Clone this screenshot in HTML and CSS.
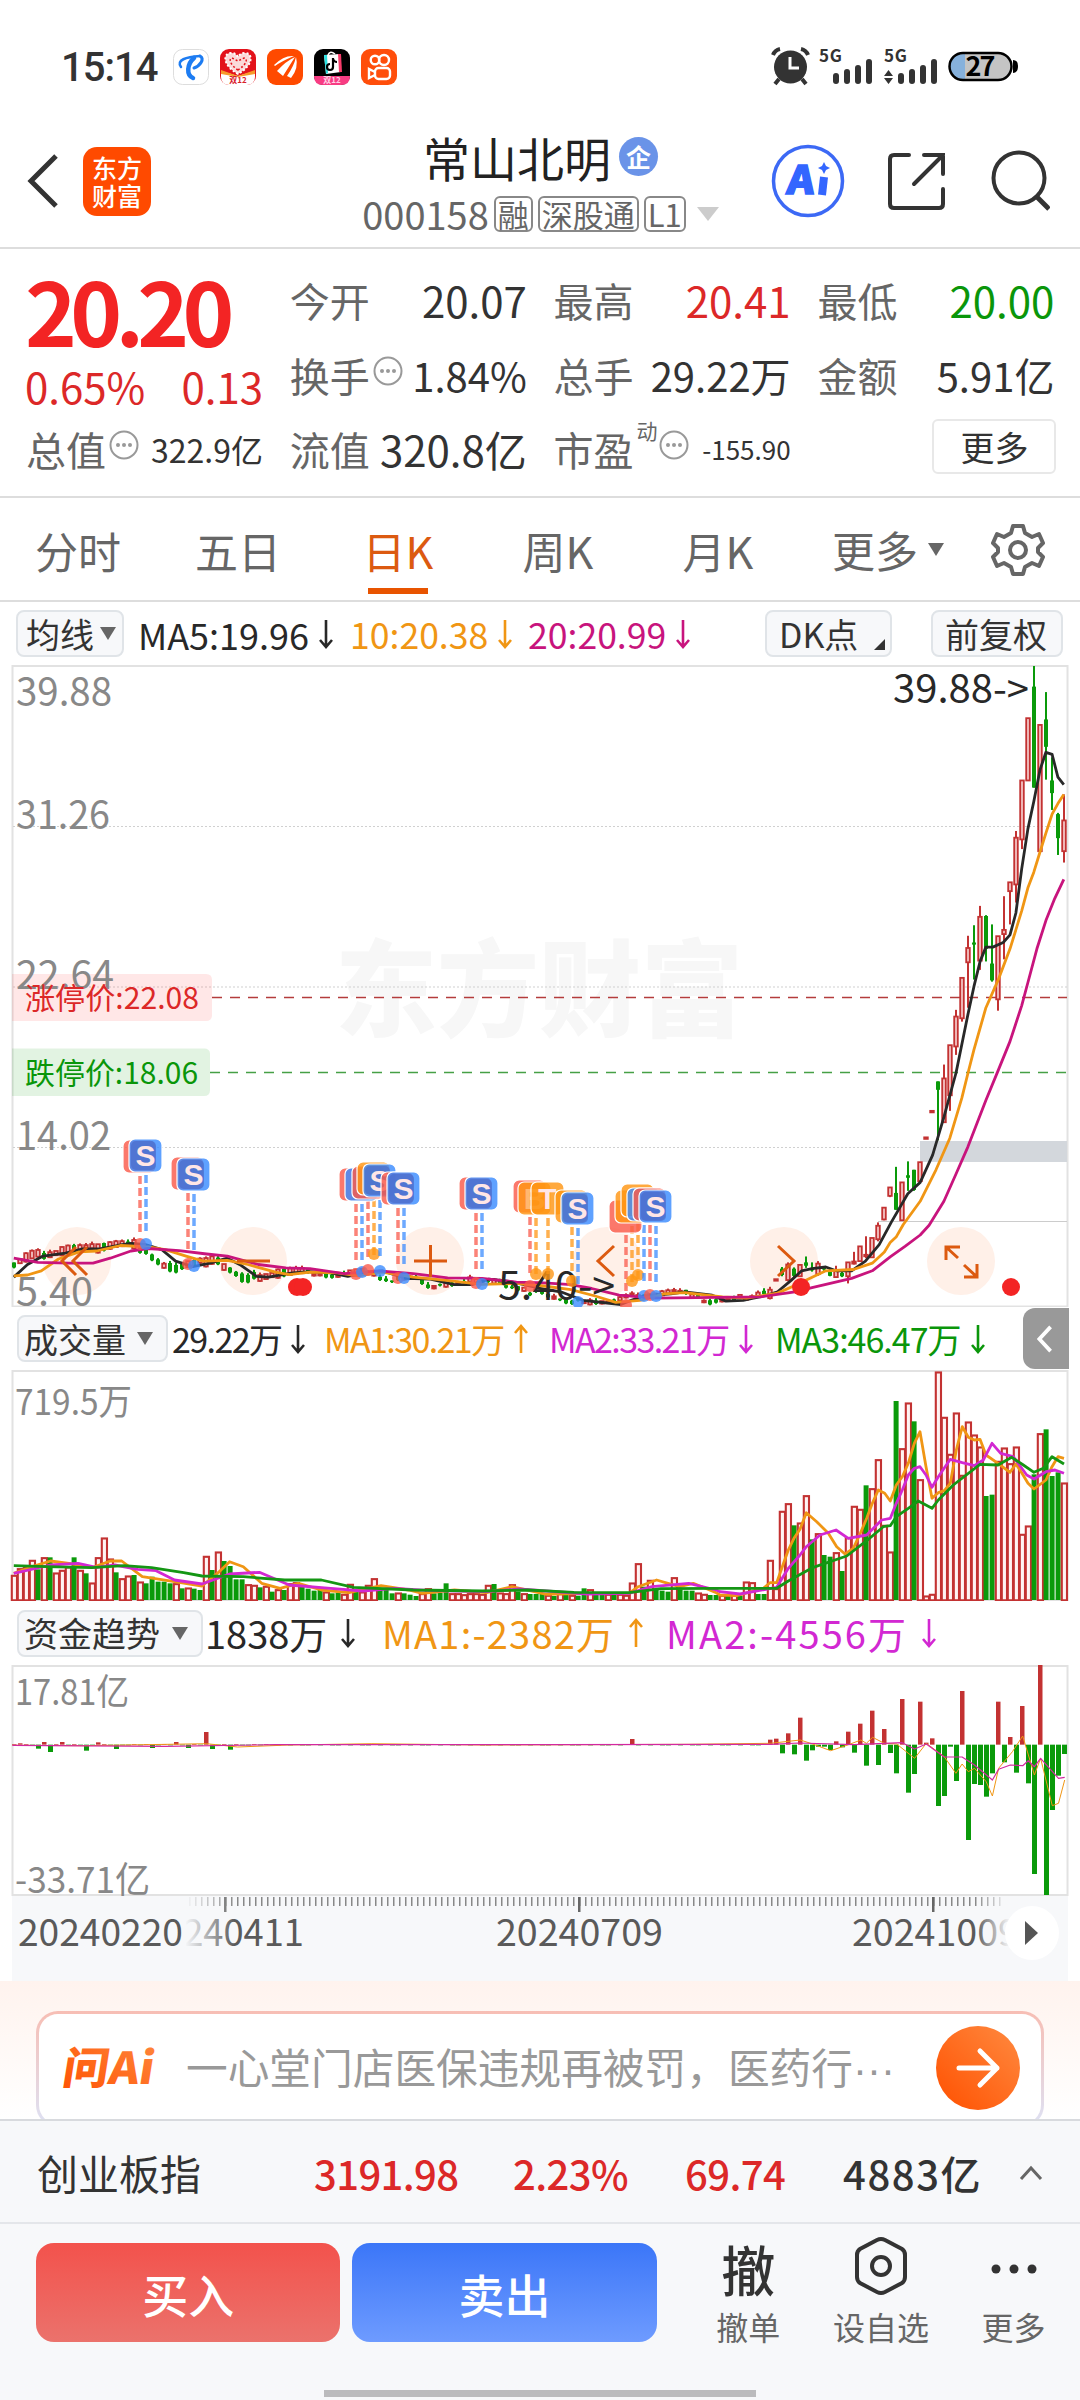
FILE: index.html
```html
<!DOCTYPE html>
<html lang="zh-CN">

<head>
  <meta charset="UTF-8">
  <meta name="viewport" content="width=device-width, initial-scale=1.0">
  <title>常山北明 000158</title>
  <link rel="stylesheet" href="styles.css">
</head>

<body>
  <svg class="defs" width="0" height="0">
    <symbol id="down" viewBox="0 0 16 30"><path d="M8 1V28M2 21L8 28L14 21" fill="none" stroke="currentColor" stroke-width="2.6"/></symbol>
    <symbol id="up" viewBox="0 0 16 30"><path d="M8 29V2M2 9L8 2L14 9" fill="none" stroke="currentColor" stroke-width="2.6"/></symbol>
    <symbol id="info" viewBox="0 0 30 30"><circle cx="15" cy="15" r="13.5" fill="none" stroke="#999" stroke-width="2"/><circle cx="9" cy="15" r="2" fill="#999"/><circle cx="15" cy="15" r="2" fill="#999"/><circle cx="21" cy="15" r="2" fill="#999"/></symbol>
  </svg>

  <div id="status">
    <div class="clock">15:14</div>
    <div class="apps">
      <svg width="36" height="36" viewBox="0 0 36 36"><rect x=".5" y=".5" width="35" height="35" rx="9" fill="#fff" stroke="#ddd"/><g fill="none" stroke="#1d7cf2" stroke-linecap="round"><path d="M8 18C3 11 13 8 27 7" stroke-width="2.500"/><path d="M27 7C32 10 27 17 21 19" stroke-width="3"/><path d="M21 9C14 15 13 26 20 29" stroke-width="4.500"/></g></svg>
      <svg width="36" height="36" viewBox="0 0 36 36"><rect width="36" height="36" rx="9" fill="#e3121b"/><path d="M1 22L18 27L35 22V28Q35 35 27 36H9Q1 35 1 28Z" fill="#fff"/><path d="M1 21L18 27L35 21V25L18 28L1 25Z" fill="#f79a2b"/><path d="M18 25C2 16 3 4 11 4Q16 4 18 8Q20 4 25 4C33 4 34 16 18 25Z" fill="#fbd9d9" stroke="#fff" stroke-width="2" stroke-dasharray="2 2"/><path d="M18 21C9 15 9 9 12 9L18 12L24 9C28 10 27 15 18 21Z" fill="none" stroke="#e3121b" stroke-width="1.5" stroke-dasharray="2 2"/><text x="18" y="34" text-anchor="middle" font-size="8" font-weight="700" fill="#d8202a">双12</text></svg>
      <svg width="36" height="36" viewBox="0 0 36 36"><rect width="36" height="36" rx="9" fill="#ff4a00"/><path d="M7 16Q17 6 27 7Q15 12 8 17ZM10 22Q19 12 28 8Q21 19 16 27ZM20 27Q27 17 29 8Q32 19 24 29Z" fill="#fff"/></svg>
      <svg width="36" height="36" viewBox="0 0 36 36"><rect width="36" height="36" rx="9" fill="#000"/><path d="M0 27H36Q36 36 27 36H9Q0 36 0 27Z" fill="#f83c83"/><path d="M10 6L26 5L27 23L12 25Z" fill="#fff"/><path d="M10 6L13 6L14 24L12 25Z" fill="#2be0e0"/><path d="M24 5L27 5L28 23L25 23Z" fill="#f83c6a"/><path d="M14 6Q16 1 21 5" fill="none" stroke="#fff" stroke-width="1.5"/><path d="M19 9V18A3 3 0 1 1 16 15M19 10Q20 13 23 13" fill="none" stroke="#000" stroke-width="2.2"/><text x="18" y="34" text-anchor="middle" font-size="8" font-weight="700" fill="#ffd0e6">双12</text></svg>
      <svg width="36" height="36" viewBox="0 0 36 36"><rect width="36" height="36" rx="9" fill="#ff4e0b"/><g fill="none" stroke="#fff" stroke-width="2.4"><circle cx="14" cy="11" r="4.3"/><circle cx="23" cy="11" r="5"/><rect x="14" y="19" width="15" height="11" rx="3.5"/><path d="M14 23L8 20V29L14 26"/></g></svg>
    </div>
    <svg class="signals" width="250" height="48" viewBox="770 44 250 48">
      <g fill="#333"><circle cx="790.5" cy="68" r="16.5"/><path d="M779 80L775 85M802 80L806 85M773 56Q775 51 780 50M808 56Q806 51 801 50" stroke="#333" stroke-width="4" fill="none"/><path d="M790 58V69H799" stroke="#fff" stroke-width="3" fill="none"/>
      <rect x="833" y="74" width="6" height="11" rx="3"/><rect x="844" y="70" width="6" height="15" rx="3"/><rect x="855" y="66" width="6" height="19" rx="3"/><rect x="866" y="60" width="6" height="25" rx="3"/>
      <rect x="898" y="74" width="6" height="11" rx="3"/><rect x="909" y="70" width="6" height="15" rx="3"/><rect x="920" y="66" width="6" height="19" rx="3"/><rect x="931" y="60" width="6" height="25" rx="3"/>
      <path d="M888.500 71L893 77H884ZM888.500 85L893 79H884Z"/>
      <text x="819" y="63" font-size="17" font-weight="700" textLength="23">5G</text><text x="884" y="63" font-size="17" font-weight="700" textLength="23">5G</text></g>
      <rect x="949.500" y="54" width="62" height="27" rx="13.500" fill="#c4c4c4"/><path d="M965 55V80Q950 81 950 67.500Q950 55 965 55Z" fill="#86b1dc"/><rect x="949.500" y="54" width="62" height="27" rx="13.500" fill="none" stroke="#000" stroke-width="2.500"/><path d="M1013 61Q1018 61 1018 67Q1018 74 1013 74Z"/>
      <text x="980.500" y="77" text-anchor="middle" font-size="27" font-weight="700" textLength="30">27</text>
    </svg>
  </div>

  <div id="header">
    <svg class="back" width="32" height="56" viewBox="0 0 32 56"><path d="M29 3L4 28L29 53" fill="none" stroke="#333" stroke-width="5"/></svg>
    <div class="logo"><span>东方</span><span>财富</span></div>
    <div class="stock">
      <div class="name">常山北明<span class="badge">企</span></div>
      <div class="code">000158<span class="tag">融</span><span class="tag">深股通</span><span class="tag">L1</span><i class="tri"></i></div>
    </div>
    <svg class="tools" width="280" height="76" viewBox="770 143 280 76" fill="none" stroke="#333" stroke-width="4">
      <circle cx="808" cy="181" r="34.500" stroke="#3c69f5" stroke-width="3.500"/>
      <text transform="translate(786 194) skewX(-6)" font-size="39" font-weight="900" fill="#3366ff" stroke="#3366ff" stroke-width="1.500" textLength="27" lengthAdjust="spacingAndGlyphs">A</text>
      <path d="M824 177L822 195" stroke="#3366ff" stroke-width="8"/>
      <path d="M824 162L826 166L830 168L826 170L824 174L822 170L818 168L822 166Z" fill="#3366ff" stroke="none"/>
      <path d="M909 155H894Q890 155 890 159V204Q890 208 894 208H939Q943 208 943 204V189M924 155H943V174M943 155L914 184" stroke-linecap="round"/>
      <circle cx="1019" cy="178" r="25.500"/><path d="M1037 197L1049 209" stroke-width="5"/>
    </svg>
  </div>

  <div id="quote">
    <div class="summary">
      <div class="price">20.20</div>
      <div class="change"><span>0.65%</span><span>0.13</span></div>
    </div>
    <div class="cell"><label>今开</label><b>20.07</b></div>
    <div class="cell"><label>最高</label><b class="red">20.41</b></div>
    <div class="cell"><label>最低</label><b class="green">20.00</b></div>
    <div class="cell"><label>换手<svg width="30" height="30"><use href="#info"/></svg></label><b class="mid">1.84%</b></div>
    <div class="cell"><label>总手</label><b class="mid">29.22万</b></div>
    <div class="cell"><label>金额</label><b class="mid">5.91亿</b></div>
    <div class="cell"><label>总值<svg width="30" height="30"><use href="#info"/></svg></label><b class="small">322.9亿</b></div>
    <div class="cell"><label>流值</label><b>320.8亿</b></div>
    <div class="cell"><label>市盈<sup>动</sup><svg width="30" height="30"><use href="#info"/></svg></label><b class="tiny">-155.90</b></div>
    <div class="cell end"><button class="more">更多</button></div>
  </div>

  <div id="tabs">
    <span>分时</span><span>五日</span><span class="active">日K</span><span>周K</span><span>月K</span>
    <span class="drop">更多<i class="tri"></i></span>
    <svg width="54" height="54" viewBox="-27 -27 54 54" fill="none" stroke="#666" stroke-width="4"><path d="M-5 -24H5L7 -17L14 -13L21 -16L25 -7L20 -2V2L25 7L21 16L14 13L7 17L5 24H-5L-7 17L-14 13L-21 16L-25 7L-20 2V-2L-25 -7L-21 -16L-14 -13L-7 -17Z" stroke-linejoin="round"/><circle r="8"/></svg>
  </div>

  <div class="legend ma">
    <span class="chip">均线<i class="tri"></i></span>
    <span class="black">MA5:19.96<svg><use href="#down"/></svg></span>
    <span class="orange">10:20.38<svg><use href="#down"/></svg></span>
    <span class="pink">20:20.99<svg><use href="#down"/></svg></span>
    <span class="chip dk">DK点<i class="corner"></i></span>
    <span class="chip fq">前复权</span>
  </div>
  <svg id="kline" class="chart" width="1080" height="642" viewBox="0 665 1080 642"></svg>

  <div class="legend vol">
    <span class="chip">成交量<i class="tri"></i></span>
    <span class="black">29.22万<svg><use href="#down"/></svg></span>
    <span class="orange">MA1:30.21万<svg><use href="#up"/></svg></span>
    <span class="magenta">MA2:33.21万<svg><use href="#down"/></svg></span>
    <span class="green">MA3:46.47万<svg><use href="#down"/></svg></span>
    <span class="fold"><svg viewBox="0 0 16 30"><path d="M14 2L2 15L14 28" fill="none" stroke="#fff" stroke-width="4"/></svg></span>
  </div>
  <svg id="volume" class="chart" width="1080" height="231" viewBox="0 1370 1080 231"></svg>

  <div class="legend fund">
    <span class="chip">资金趋势<i class="tri"></i></span>
    <span class="black">1838万<svg><use href="#down"/></svg></span>
    <span class="orange">MA1:-2382万<svg><use href="#up"/></svg></span>
    <span class="magenta">MA2:-4556万<svg><use href="#down"/></svg></span>
  </div>
  <svg id="flow" class="chart" width="1080" height="316" viewBox="0 1665 1080 316"></svg>

  <div id="ask">
    <div class="askbox">
      <svg class="asklogo" width="98" height="54" viewBox="0 0 98 54">
        <defs><linearGradient id="hot" x1="0" y1="1" x2="1" y2="0"><stop offset="0" stop-color="#ff5000"/><stop offset="1" stop-color="#ff8a40"/></linearGradient></defs>
        <text transform="translate(1 43) skewX(-9)" font-size="44" font-weight="900" fill="url(#hot)" textLength="91" lengthAdjust="spacingAndGlyphs">问Ai</text>
      </svg>
      <span>一心堂门店医保违规再被罚，医药行<i>···</i></span>
      <svg width="84" height="84" viewBox="0 0 84 84"><circle cx="42" cy="42" r="42" fill="url(#hot)"/><path d="M23 42H61M44 25L61 42L44 59" fill="none" stroke="#fff" stroke-width="5" stroke-linecap="round" stroke-linejoin="round"/></svg>
    </div>
  </div>

  <div id="index">
    <span>创业板指</span><b class="red">3191.98</b><b class="red">2.23%</b><b class="red">69.74</b><b class="amount">4883亿</b>
    <svg width="24" height="16" viewBox="0 0 24 16"><path d="M2 14L12 3L22 14" fill="none" stroke="#666" stroke-width="3"/></svg>
  </div>

  <div id="actions">
    <button class="buy">买入</button>
    <button class="sell">卖出</button>
    <div class="act"><span class="big">撤</span>撤单</div>
    <div class="act"><svg width="60" height="60" viewBox="-30 -30 60 60" fill="none" stroke="#333" stroke-width="4"><path d="M-4 -26Q0 -28 4 -26L21 -17Q24 -15 24 -11V11Q24 15 21 17L4 26Q0 28 -4 26L-21 17Q-24 15 -24 11V-11Q-24 -15 -21 -17Z"/><circle r="9"/></svg>设自选</div>
    <div class="act"><svg width="60" height="60" viewBox="-30 -30 60 60" fill="#333"><circle cx="-18" cy="3" r="4.500"/><circle cy="3" r="4.500"/><circle cx="18" cy="3" r="4.500"/></svg>更多</div>
  </div>
  <div id="home"></div>

  <script src="charts.js"></script>
</body>

</html>
```
FILE: styles.css
```css
* {
  box-sizing: border-box;
}

body {
  margin: 0;
  width: 1080px;
  height: 2400px;
  overflow: hidden;
  display: flex;
  flex-direction: column;
  background: #fff;
  color: #333;
  font-family: "Noto Sans CJK SC", "Noto Sans", sans-serif;
  font-size: 36px;
  line-height: 1;
  white-space: nowrap;
}

svg {
  display: block;
  flex: none;
}

.defs {
  position: absolute;
}

b {
  font-weight: 400;
}

button {
  border: 0;
  padding: 0;
  font: inherit;
  color: inherit;
}

.red { color: #dc2828; }
.green { color: #0a960a; }
.black { color: #282828; }
.orange { color: #f09614; }
.pink { color: #c8147d; }
.magenta { color: #d228d2; }

.tri {
  width: 0;
  height: 0;
  border: 8px solid transparent;
  border-top: 13px solid #666;
  border-bottom: 0;
}

/* status bar */
#status {
  height: 120px;
  flex: none;
  padding: 14px 60px 0 61px;
  display: flex;
  align-items: center;
}

.clock {
  width: 112px;
  padding-top: 1px;
  font-family: Roboto, sans-serif;
  font-size: 40px;
  font-weight: 500;
  letter-spacing: -1px;
}

.apps {
  display: flex;
  gap: 11px;
}

.signals {
  margin-left: auto;
}

/* header */
#header {
  height: 129px;
  flex: none;
  display: flex;
  border-bottom: 2px solid #ddd;
  padding: 0 30px 0 27px;
}

.back {
  margin-top: 33px;
}

.logo {
  width: 68px;
  height: 69px;
  margin: 27px 0 0 24px;
  border-radius: 14px;
  background: #ff4a00;
  color: #fff;
  font-size: 25px;
  font-weight: 500;
  display: flex;
  flex-direction: column;
  align-items: center;
  justify-content: center;
  gap: 3px;
}

.stock {
  flex: 1;
  display: flex;
  flex-direction: column;
  align-items: center;
  padding-top: 13px;
  padding-left: 160px;
}

.name {
  display: flex;
  align-items: center;
  font-size: 47px;
  color: #222;
}

.badge {
  width: 39px;
  height: 39px;
  margin-left: 8px;
  border-radius: 50%;
  background: #6a93e8;
  color: #fff;
  font-size: 25px;
  line-height: 38px;
  font-weight: 700;
  text-align: center;
}

.code {
  display: flex;
  align-items: center;
  gap: 5px;
  margin-top: 15px;
  font-size: 38px;
  color: #666;
}

.tag {
  height: 36px;
  padding: 0 2px;
  border: 2px solid #888;
  border-radius: 6px;
  font-size: 31px;
  line-height: 32px;
}

.code .tri {
  border-width: 14px 11px 0;
  border-top-color: #ccc;
  margin-left: 6px;
}

.tools {
  margin-top: 23px;
}

/* quote */
#quote {
  height: 249px;
  flex: none;
  display: grid;
  grid-template-columns: repeat(4, 237px);
  grid-template-rows: repeat(3, 74.5px);
  column-gap: 26.8px;
  padding: 14px 26px 0;
  border-bottom: 2px solid #ddd;
}

.summary {
  grid-row: span 2;
  margin-left: -1px;
}

.price {
  margin-top: 2px;
  font-size: 88px;
  font-weight: 700;
  letter-spacing: -6.7px;
  color: #f32424;
}

.change {
  display: flex;
  justify-content: space-between;
  margin-top: 12px;
  font-size: 42px;
  color: #dc2828;
}

.cell {
  display: flex;
  align-items: center;
  justify-content: space-between;
}

.cell label {
  display: flex;
  align-items: center;
  font-size: 40px;
  color: #666;
}

.cell label svg {
  margin: -8px 0 0 3px;
}

.cell sup {
  font-size: 21px;
  margin: -38px -2px 0 3px;
  line-height: 1;
}

.cell b {
  font-size: 42px;
}

.cell .mid {
  font-size: 40px;
}

.cell .small {
  font-size: 32px;
}

.cell .tiny {
  font-size: 26px;
}

.end {
  justify-content: flex-end;
}

.more {
  width: 124px;
  height: 55px;
  background: #fff;
  border: 2px solid #e8e8e8;
  border-radius: 6px;
  font-size: 34px;
  margin: -5px -2px 0 0;
}

/* period tabs */
#tabs {
  height: 104px;
  flex: none;
  display: grid;
  grid-template-columns: repeat(5, 160px) 157px 54px;
  margin-left: -2px;
  padding-right: 0;
  align-items: center;
  border-bottom: 2px solid #ddd;
  font-size: 43px;
  color: #666;
}

#tabs span {
  height: 102px;
  line-height: 104px;
  text-align: center;
}

#tabs .active {
  color: #dc5a10;
  background: linear-gradient(#e85400, #e85400) center 90px / 60px 6px no-repeat;
}

#tabs .drop {
  display: flex;
  align-items: center;
  padding-left: 34px;
  gap: 10px;
}

#tabs svg {
  margin: 2px 0 0 36px;
}

/* indicator rows */
.legend {
  height: 63px;
  flex: none;
  display: grid;
  align-items: center;
  padding-left: 16px;
}

.legend > span {
  display: flex;
  align-items: center;
}

.legend svg {
  width: 16px;
  height: 30px;
  margin-left: 9px;
}

.legend .chip {
  height: 47px;
  padding-left: 8px;
  gap: 6px;
  border: 2px solid #e0e4e8;
  border-radius: 8px;
  background: #f7f8fa;
  font-size: 34px;
  position: relative;
}

.legend .chip .tri {
  margin-left: auto;
  margin-right: 13px;
}

.ma {
  grid-template-columns: 108px 226px 178px 236px 128px 132px;
}

.ma > span:nth-child(2) {
  padding-left: 14px;
}

.ma .orange,
.ma .pink {
  font-size: 35.6px;
}

.ma .chip .tri {
  margin-right: 6px;
}

.ma .dk {
  padding-left: 12px;
  margin-left: 1px;
}

.ma .fq {
  margin: 0 -39px 0 39px;
  padding-left: 12px;
}

.corner {
  position: absolute;
  right: 5px;
  bottom: 5px;
  border-left: 11px solid transparent;
  border-bottom: 11px solid #333;
}

.vol {
  grid-template-columns: 151px 156px 225px 226px 248px 46px;
  padding-left: 17px;
  font-size: 34px;
  letter-spacing: -1.6px;
}

.vol .chip,
.fund .chip {
  padding-left: 5px;
  letter-spacing: 0;
}

.vol > span:nth-child(2) {
  padding-left: 4px;
}

.vol > .green {
  letter-spacing: -1px;
}

.fold {
  height: 61px;
  background: #999;
  border-radius: 12px 0 0 12px;
}

.legend .fold svg {
  margin-left: 14px;
  height: 28px;
}

.fund {
  height: 64px;
  grid-template-columns: 186px 179px 284px 300px;
  padding-left: 17px;
  font-size: 38px;
}

.fund > span:nth-child(2) {
  padding-left: 2px;
}

.fund svg {
  margin-left: 13px;
}

.fund > .orange {
  letter-spacing: 1.2px;
}

.fund > .magenta {
  letter-spacing: 2.1px;
}

.chart text {
  font-size: 39px;
  fill: #888;
}

.chart .dark {
  fill: #282828;
}

/* ask box */
#ask {
  height: 138px;
  flex: none;
  overflow: hidden;
  padding: 30px 36px 0;
  background: linear-gradient(#fff3ee, #fff);
}

.askbox {
  height: 116px;
  display: flex;
  align-items: center;
  padding: 0 21px 2px;
  border: 3px solid transparent;
  border-radius: 22px;
  background: linear-gradient(#fff, #fff) padding-box, linear-gradient(#f7beb4, #dde2f5) border-box;
  color: #999;
  font-size: 41.7px;
}

.askbox span {
  width: 750px;
  margin-left: 28px;
}

.askbox i {
  font-family: "Liberation Sans", sans-serif;
  font-style: normal;
  font-size: 42px;
}

/* index strip */
#index {
  height: 105px;
  flex: none;
  display: grid;
  grid-template-columns: 277px 199px 172px 158px 176px 24px;
  align-items: center;
  padding: 2px 0 0 37px;
  border-top: 2px solid #d8dade;
  border-bottom: 2px solid #e4e6ea;
  background: #f7f8fa;
  font-size: 41px;
}

#index b {
  font-size: 40px;
  font-weight: 500;
  letter-spacing: -.6px;
}

#index .amount {
  letter-spacing: 1.6px;
}

/* bottom bar */
#actions {
  height: 160px;
  flex: none;
  display: flex;
  padding: 19px 0 0 36px;
  background: #f7f8fa;
}

#actions button {
  width: 305px;
  height: 99px;
  margin-right: 12px;
  border-radius: 18px;
  color: #fff;
  font-size: 46px;
  font-weight: 500;
}

.buy {
  background: linear-gradient(#f3524c, #eb726c);
}

.sell {
  background: linear-gradient(#3b76f8, #6e9bff);
}

.act {
  width: 133px;
  display: flex;
  flex-direction: column;
  align-items: center;
  gap: 14px;
  margin-top: -7px;
  font-size: 32px;
  color: #666;
}

.act:nth-child(3) {
  margin-left: 13px;
}

.act .big {
  height: 60px;
  line-height: 66px;
  font-size: 54px;
  font-weight: 500;
  color: #333;
}

#home {
  flex: 1;
  background: #f7f8fa linear-gradient(#bbbbbd, #bbbbbd) 324px 6px / 432px 7px no-repeat;
}
```
FILE: charts.js
```js
const N = 176;
const RED = '#c33232';
const GREEN = '#0a9a0a';
// first bar sits at x=14, one bar every 6px
const barX = i => 14 + i * 6;
const fromRight = k => 1064 - k * 6;

const kY = v => 650 + v / 2.376;
const kL = x => x / 2.904;
const kR = x => 540 + x / 2.904;

const points = (list, fx, fy) => {
  const out = [];
  for (let i = 0; i < list.length; i += 2) out.push([fx(list[i]), fy(list[i + 1])]);
  return out;
};
const line = (pts, color, w) =>
  `<polyline points="${pts.map(p => p[0].toFixed(1) + ',' + p[1].toFixed(1)).join(' ')}" fill="none" stroke="${color}" stroke-width="${w}" stroke-linejoin="round"/>`;
const rect = (x, y, w, h, fill, extra = '') =>
  `<rect x="${x}" y="${y}" width="${w}" height="${h}" fill="${fill}" ${extra}/>`;
const text = (x, y, len, s, cls = '', extra = '') =>
  `<text x="${x}" y="${y}" textLength="${len}" lengthAdjust="spacingAndGlyphs" class="${cls}" ${extra}>${s}</text>`;
const frame = (y, h) => rect(12.5, y, 1055, h, 'none', 'stroke="#e2e2e2" stroke-width="2"');

function valueAt(pts, x) {
  for (let i = 1; i < pts.length; i++) {
    if (x <= pts[i][0]) {
      const [a, b] = [pts[i - 1], pts[i]];
      return a[1] + (b[1] - a[1]) * (x - a[0]) / (b[0] - a[0]);
    }
  }
  return pts[pts.length - 1][1];
}

/* ---- K line ---- */
const ma5 = points([40,1490,80,1460,125,1440,190,1433,240,1423,290,1423,340,1415,380,1410,420,1412,470,1425,510,1452,560,1465,610,1457,660,1445,700,1462,745,1488,780,1490,850,1480,900,1477,960,1480,1010,1488,1060,1480,1110,1475,1180,1493,1250,1495,1320,1508,1370,1508,1420,1495,1480,1500,1560,1515], kL, kY)
  .concat(points([0,1517,60,1525,125,1545,235,1555,265,1545,300,1535,380,1530,420,1525,500,1533,540,1547,590,1545,620,1540,650,1535,690,1525,730,1497,760,1475,790,1470,830,1466,860,1475,905,1475,945,1452,985,1413,1020,1360,1068,1292,1104,1265,1140,1200,1173,1110,1208,1005,1243,865,1260,800,1278,740,1295,706,1315,706,1345,695,1365,677,1382,625,1399,520,1417,425,1434,360,1452,285,1469,243,1487,248,1504,302,1521,320], kR, kY));
const ma10 = points([40,1487,80,1485,120,1475,170,1447,230,1430,280,1428,350,1415,430,1418,480,1425,540,1440,590,1452,660,1450,720,1460,800,1478,840,1484,900,1478,980,1480,1040,1487,1110,1478,1200,1490,1290,1497,1400,1507,1500,1505,1560,1510], kL, kY)
  .concat(points([0,1510,90,1520,160,1535,220,1550,290,1545,360,1530,420,1527,530,1537,600,1540,690,1528,740,1510,830,1475,910,1472,965,1457,1000,1430,1017,1408,1034,1395,1055,1365,1104,1310,1150,1235,1190,1160,1225,1065,1243,1005,1260,950,1295,850,1330,785,1365,710,1399,620,1417,565,1434,528,1452,480,1469,435,1487,390,1504,365,1521,343], kR, kY));
const ma20 = points([40,1445,110,1455,200,1457,270,1457,320,1445,380,1428,430,1422,520,1427,600,1435,660,1440,750,1460,830,1468,900,1470,1000,1482,1100,1475,1200,1482,1300,1492,1400,1493,1500,1502,1560,1503], kL, kY)
  .concat(points([0,1503,90,1508,150,1517,230,1533,330,1540,640,1537,740,1525,790,1515,905,1493,965,1475,1017,1442,1060,1417,1104,1390,1130,1367,1173,1310,1208,1245,1243,1180,1295,1070,1330,1000,1365,930,1399,845,1417,790,1443,710,1469,643,1495,590,1521,545], kR, kY));

// newest first: high, body top, body bottom, low, up?
const candles = [
  [343,405,478,505,1],[387,390,447,487,0],[255,310,340,380,0],[100,165,230,308,0],[178,178,478,478,1],
  [38,87,327,327,0],[162,162,310,310,1],[310,310,450,473,1],[430,446,557,600,1],[552,552,573,652,1],
  [585,665,675,735,1],[680,680,830,857,1],[652,745,785,788,0],[630,632,710,740,0],[608,634,738,760,1],
  [654,695,700,783,0],[679,708,742,850,1],[779,779,875,883,1],[855,871,942,962,1],[939,939,1058,1095,1],
  [985,1018,1122,1122,1],[1025,1025,1045,1165,0],[1095,1095,1098,1098,1],[1158,1158,1161,1161,1],[1217,1217,1262,1262,1],
  [1235,1235,1283,1285,0],[1215,1248,1254,1285,0],[1265,1265,1355,1355,1],[1228,1290,1330,1330,0],[1277,1277,1297,1300,1],
  [1325,1325,1353,1355,1],[1360,1368,1400,1405,1],[1397,1397,1443,1443,1],[1393,1437,1440,1445,1],[1417,1417,1452,1452,1],
  [1430,1453,1458,1460,1],[1455,1455,1488,1505,1],[1475,1480,1488,1490,0],[1463,1473,1490,1492,1],[1470,1478,1487,1488,0],
  [1465,1468,1472,1476,0],[1452,1458,1483,1487,1],[1455,1468,1474,1477,0],[1441,1455,1463,1468,0],[1461,1461,1488,1488,1],
  [1467,1470,1487,1490,0],[1455,1460,1497,1500,1],[1466,1470,1485,1488,0],[1495,1495,1498,1498,1],[1513,1520,1540,1543,1]
];

// flat stretch: closes run a couple of bars ahead of the 5-day average
for (let k = candles.length; k < N; k++) {
  const x = fromRight(k);
  const c = (valueAt(ma5, x + 13) - 650) * 2.376;
  const slope = (valueAt(ma5, x + 16) - valueAt(ma5, x + 4)) * 2.376;
  const up = slope < -1 ? k % 5 !== 0 : slope > 4 ? k % 5 === 0 : k % 3 !== 0;
  const half = k > 125 ? 5 + (k * 7 % 6) : 2 + (k * 5 % 4);
  const mid = Math.min(c + (k * 37 % 9) - 4 + (slope > 6 ? 8 : 0), 1550);
  candles.push([mid - half - (k * 13 % 7), mid - half, mid + half, mid + half + 2, up]);
}

function drawKline() {
  let s = '';
  s += `<text x="335" y="1028" textLength="408" lengthAdjust="spacingAndGlyphs" style="font-size:105px;font-weight:900;fill:#f7f7f7">东方财富</text>`;
  s += frame(666, 640.5);
  for (const y of [826.5, 987, 1147.5])
    s += `<path d="M13 ${y}H1067" stroke="#d0d0d0" stroke-width="1.200" stroke-dasharray="2 2"/>`;

  s += `<path d="M12 974H206Q212 974 212 980V1015Q212 1021 206 1021H12Z" fill="#ff3c3c" fill-opacity=".12"/>`;
  s += `<path d="M12 1048.500H204Q210 1048.500 210 1054V1090Q210 1096 204 1096H12Z" fill="#14a014" fill-opacity=".12"/>`;
  s += '<path d="M212 997.500H1067" stroke="#b43c3c" stroke-width="1.500" stroke-dasharray="10 8"/>';
  s += '<path d="M210 1072.500H1067" stroke="#46a046" stroke-width="1.500" stroke-dasharray="10 8"/>';
  s += rect(920, 1141, 147, 21, '#d3d7dc') + rect(878, 1221, 189, 1, '#ccc');

  for (const x of [77, 253, 430, 607, 784, 961]) s += `<circle cx="${x}" cy="1261" r="34" fill="#fff0e8"/>`;
  s += text(16, 706, 96, '39.88') + text(16, 829, 94, '31.26') + text(16, 989, 98, '22.64') + text(16, 1150, 95, '14.02') + text(16, 1305.5, 77, '5.40');
  s += text(25, 1009, 174, '涨停价:22.08', '', 'style="font-size:30px;fill:#dc2828"');
  s += text(25, 1084, 173, '跌停价:18.06', '', 'style="font-size:30px;fill:#0a960a"');

  candles.forEach(([h, t, b, l, up], k) => {
    const x = fromRight(k);
    const color = up ? RED : GREEN;
    const bh = Math.max(kY(b) - kY(t), 1.5);
    s += rect(x - 1, kY(h), 2, Math.max(kY(l) - kY(h), 1), color);
    if (up) s += rect(x - 1.8, kY(t), 3.6, bh, bh > 3 ? '#f3c4c4' : color, `stroke="${color}" stroke-width="1.800"`);
    else s += rect(x - 2, kY(t), 4, bh, color);
  });

  s += line(ma5, '#282828', 2.8) + line(ma10, '#f09614', 2.8) + line(ma20, '#c8147d', 2.8);
  s += text(893, 703, 136, '39.88-&gt;', 'dark') + text(498, 1300, 117, '5.40-&gt;', 'dark');

  s += '<g fill="none" stroke="#dc5a10" stroke-width="3"><path d="M76 1247L62 1261L76 1275M87 1247L73 1261L87 1275M237 1261H270M414 1261H447M430.500 1245V1277M614 1246L598 1261L614 1276M778 1246L794 1261L778 1276"/>';
  s += '<path d="M946 1260V1247H960M946 1247L958 1258M964 1265L977 1277M964 1277H977V1264"/></g>';
  for (const x of [297, 303, 801, 1011]) s += `<circle cx="${x}" cy="1287" r="9" fill="#f32424"/>`;

  // trade markers
  const C = { r: '#fa5a4b', b: '#3c8cff', o: '#ff9614' };
  // dashed leader: colour, x, top, dot y
  const leads = [['r',140,1176,1244],['b',146,1175,1244],['r',188,1193,1264],['b',194,1194,1266],['r',356,1204,1274],['b',362,1204,1272],['r',368,1201,1270],['o',374,1199,1254],['b',380,1200,1271],['r',398,1208,1278],['b',404,1208,1278],['r',476,1213,1283],['b',482,1213,1284],['r',530,1217,1286],['o',536,1218,1274],['o',548,1218,1274],['o',572,1227,1281],['b',578,1228,1302],['r',626,1235,1305],['o',632,1226,1281],['o',638,1223,1275],['b',644,1225,1296],['r',650,1225,1295],['b',656,1226,1296]];
  for (const [c, x, y, dot] of leads) {
    s += `<path d="M${x} ${y}V${y + 56}" stroke="${C[c]}" stroke-opacity=".75" stroke-width="3.500" stroke-dasharray="8 4"/>`;
    s += `<circle cx="${x}" cy="${dot}" r="6" fill="${C[c]}" fill-opacity=".8"/>`;
  }
  // colour, x, y, letter
  const tags = [['r',123,1140,''],['b',129,1139,'S'],['r',171,1157,''],['b',177,1158,'S'],['r',339,1168,''],['b',345,1168,''],['r',352,1166,''],['o',357,1162,''],['b',363,1164,'S'],['r',381,1172,''],['b',387,1172,'S'],['r',459,1177,''],['b',465,1177,'S'],['r',513,1180,''],['o',518,1182,'B'],['o',531,1182,'T'],['o',555,1190,''],['b',561,1192,'S'],['r',609,1200,''],['o',615,1190,''],['o',621,1184,''],['b',627,1188,''],['r',633,1188,''],['b',639,1190,'S']];
  for (const [c, x, y, t] of tags) {
    s += rect(x, y, 33, 33, C[c], 'rx="6" fill-opacity=".82" stroke="#fff" stroke-width="1.200"');
    if (t && c === 'b') s += rect(x + 2, y + 2, 25, 29, '#4668c8', 'rx="5" fill-opacity=".6"');
    if (t) s += `<text x="${x + 16.5}" y="${y + 27}" text-anchor="middle" style="font:700 30px 'Liberation Sans',sans-serif;fill:${t === 'B' ? '#ffb870' : '#ffe6e6'}">${t}</text>`;
  }
  document.getElementById('kline').innerHTML = s;
}

/* ---- volume ---- */
const vY = v => 1300 + v / 3;
const vL = x => x / 2.178;
const vR = x => 720 + x / 3;
// oldest first, negative = down day
const volTop = [825,805,800,780,-808,772,-772,818,810,800,-772,810,-820,848,772,713,776,-817,835,827,-825,845,-850,-830,-845,-845,-850,850,-865,863,-866,-870,768,-810,755,-783,-798,-838,-838,853,855,-862,858,-875,868,-870,850,847,-852,-866,-872,-868,875,-880,-878,882,852,-875,875,855,835,-865,-870,-880,878,-880,-884,-888,880,865,-880,-878,-850,880,880,883,880,880,882,855,-852,878,880,853,-875,880,-882,-882,-882,885,-888,880,-885,885,-887,-865,868,-882,-885,882,-885,882,885,848,790,-860,840,-868,-872,-875,832,-868,-872,-872,878,882,-885,-885,885,-886,885,-887];
const volRight = [548,-517,-528,-388,400,-523,677,702,440,490,443,483,-584,-588,440,404,365,525,338,462,351,215,882,887,538,-364,308,445,-303,755,675,478,565,-556,627,618,712,-813,757,-770,-765,700,-718,586,668,-676,610,633,865,780,-882,-882,847,845];

function drawVolume() {
  let s = frame(1371, 229) + text(15, 1415, 117, '719.5万', '', 'style="font-size:36px"');
  const all = volTop.slice(0, N - volRight.length).concat(volRight.slice().reverse());
  all.forEach((v, i) => {
    const y = vY(Math.abs(v));
    const x = barX(i);
    if (v < 0) s += rect(x - 2.4, y, 5, 1600 - y, GREEN);
    else s += rect(x - 2.2, y + .8, 5.2, 1599.5 - y, '#fff3f3', `stroke="${RED}" stroke-width="2.100"`);
  });
  const a = points([30,820,70,800,110,783,150,790,200,803,240,783,265,783,310,830,380,845,440,858,475,818,500,785,530,800,570,850,610,865,650,850,700,870,760,878,830,857,890,870,920,880,990,870,1060,878,1115,860,1190,883,1280,880,1370,880,1390,860,1430,840,1455,850,1480,860,1510,850,1560,878], vL, vY)
    .concat(points([0,885,50,887,130,865,150,848,170,848,187,800,205,750,223,713,240,688,259,638,290,665,325,700,350,740,375,762,400,745,421,700,440,655,457,610,475,570,494,580,511,603,529,555,547,530,565,490,583,430,600,395,618,500,636,595,655,578,673,572,691,550,709,450,727,380,745,412,763,420,780,418,798,465,834,490,870,517,888,492,906,520,924,550,942,567,978,540,996,500,1014,470,1032,475], vR, vY));
  const b = points([30,820,110,795,170,790,210,802,250,795,300,808,340,812,380,840,440,852,500,822,565,817,630,855,720,865,790,873,860,865,940,872,1060,875,1130,867,1280,882,1370,880,1420,860,1500,850,1560,870], vL, vY)
    .concat(points([0,875,60,882,170,862,205,805,240,765,259,740,300,705,348,690,385,715,440,705,485,660,511,655,529,610,547,570,565,525,583,505,600,500,618,525,636,562,655,530,691,478,727,488,763,497,790,480,816,430,842,460,880,470,920,525,942,537,978,515,1005,510,1032,520], vR, vY));
  const c = points([30,797,100,800,200,803,270,797,330,803,400,818,440,828,530,830,620,840,700,840,770,862,900,870,1050,873,1150,870,1250,877,1370,878,1440,866,1560,865], vL, vY)
    .concat(points([0,865,170,865,205,843,280,802,380,768,440,722,490,680,511,677,529,650,565,625,595,603,636,625,655,600,700,555,780,493,834,495,875,472,910,495,942,517,970,505,996,470,1032,492], vR, vY));
  s += line(a, '#f09614', 2.8) + line(b, '#d228d2', 2.8) + line(c, '#149614', 2.8);
  document.getElementById('volume').innerHTML = s;
}

/* ---- capital flow + date axis ---- */
const fX = x => x / 1.452;
const fY = v => 1600 + v / 3;
// newest first
const flow = [462,527,630,885,195,822,550,318,518,411,487,305,520,590,555,552,720,273,543,440,588,618,415,428,305,522,578,297,520,459,387,495,332,497,371,458,395,442,424,450,440,440,451,482,353,463,400,460,416,419];
const spikes = { 72: 417, 143: 396, 146: 444, 142: 447, 139: 449, 148: 426, 152: 444, 158: 447, 161: 427, 163: 452, 167: 426, 169: 456, 170: 426, 171: 446, 174: 430 };

function drawFlow() {
  let s = frame(1666, 229);
  s += text(15, 1705, 114, '17.81亿', '', 'style="font-size:36px"') + text(15, 1893, 135, '-33.71亿', '', 'style="font-size:36px"');
  const a = points([18,436,120,437,300,431,345,441,420,435,540,431,700,435,1000,433,1119,430,1162,420,1180,432,1206,452,1232,434,1250,420,1258,430,1267,412,1284,430,1302,432,1328,475,1345,430,1371,470,1388,520,1397,492,1406,515,1415,505,1432,545,1441,588,1450,505,1470,455,1485,408,1502,525,1511,475,1528,617,1537,610,1546,540], fX, fY);
  const b = points([18,436,240,439,400,434,800,434,1119,433,1160,429,1240,434,1310,428,1328,447,1345,432,1371,471,1397,471,1415,495,1441,540,1450,508,1467,495,1485,497,1493,482,1502,500,1511,475,1537,535,1546,532], fX, fY);
  for (let k = 0; k < N; k++) {
    const v = flow[k] || spikes[k] || (k * 7 % 5 < 2 ? 432 : 436);
    const y = fY(v), zero = fY(434);
    s += v < 434 ? rect(fromRight(k) - 2, y, 4.5, zero - y, RED) : rect(fromRight(k) - 2, zero, 5, y - zero, GREEN);
  }
  s += line(a, '#f09614', 1) + line(b, '#d228a0', 1.2);

  s += '<defs><linearGradient id="fade"><stop offset="0" stop-color="#f7f8fa"/><stop offset="1" stop-color="#f7f8fa" stop-opacity="0"/></linearGradient><linearGradient id="fadeR"><stop offset="0" stop-color="#f7f8fa" stop-opacity="0"/><stop offset="1" stop-color="#f7f8fa"/></linearGradient></defs>';
  s += rect(12, 1896, 1056, 85, '#f7f8fa');
  for (let x = 189; x < 1003; x += 6) s += rect(x, 1897, 1.5, 9, '#888');
  for (const x of [225, 579, 933]) s += rect(x - 1, 1897, 2.5, 15, '#666');
  const ax = 'style="font-size:37px;fill:#5a5a5a"';
  s += text(143, 1946, 161, '20240411', '', ax) + text(496, 1946, 167, '20240709', '', ax) + text(852, 1946, 167, '20241009', '', ax);
  s += rect(12, 1897, 174, 82, '#f7f8fa') + rect(185, 1897, 50, 82, 'url(#fade)') + rect(975, 1897, 35, 82, 'url(#fadeR)') + rect(1009, 1897, 59, 82, '#f7f8fa');
  s += text(18, 1946, 165, '20240220', '', ax);
  s += '<circle cx="1032" cy="1933" r="27" fill="#fff"/><path d="M1025 1921V1945L1038 1933Z" fill="#555"/>';
  document.getElementById('flow').innerHTML = s;
}

drawKline();
drawVolume();
drawFlow();
```
